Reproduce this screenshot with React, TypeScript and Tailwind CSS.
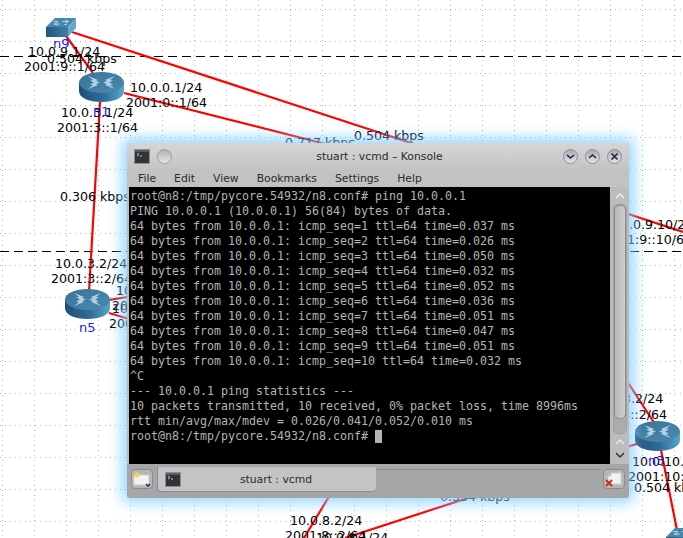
import React from "react";

const terminalLines = [
  "root@n8:/tmp/pycore.54932/n8.conf# ping 10.0.0.1",
  "PING 10.0.0.1 (10.0.0.1) 56(84) bytes of data.",
  "64 bytes from 10.0.0.1: icmp_seq=1 ttl=64 time=0.037 ms",
  "64 bytes from 10.0.0.1: icmp_seq=2 ttl=64 time=0.026 ms",
  "64 bytes from 10.0.0.1: icmp_seq=3 ttl=64 time=0.050 ms",
  "64 bytes from 10.0.0.1: icmp_seq=4 ttl=64 time=0.032 ms",
  "64 bytes from 10.0.0.1: icmp_seq=5 ttl=64 time=0.052 ms",
  "64 bytes from 10.0.0.1: icmp_seq=6 ttl=64 time=0.036 ms",
  "64 bytes from 10.0.0.1: icmp_seq=7 ttl=64 time=0.051 ms",
  "64 bytes from 10.0.0.1: icmp_seq=8 ttl=64 time=0.047 ms",
  "64 bytes from 10.0.0.1: icmp_seq=9 ttl=64 time=0.051 ms",
  "64 bytes from 10.0.0.1: icmp_seq=10 ttl=64 time=0.032 ms",
  "^C",
  "--- 10.0.0.1 ping statistics ---",
  "10 packets transmitted, 10 received, 0% packet loss, time 8996ms",
  "rtt min/avg/max/mdev = 0.026/0.041/0.052/0.010 ms",
];

const labels: [string, number, number][] = [
  ["10.0.9.1/24", 28, 44],
  ["2001:9::1/64", 24, 59],
  ["0.504 kbps", 47, 51],
  ["10.0.0.1/24", 130, 80],
  ["2001:0::1/64", 126, 95],
  ["10.0.3.1/24", 61, 105],
  ["2001:3::1/64", 57, 120],
  ["0.306 kbps", 60, 189],
  ["0.504 kbps", 354, 128],
  ["0.717 kbps", 285, 135],
  ["10.0.3.2/24", 55, 256],
  ["2001:3::2/64", 51, 271],
  ["10.0.4.1/24", 116, 283],
  ["2001:4::1/64", 112, 298],
  ["10.0.5.1/24", 112, 301],
  ["2001:5::1/64", 109, 316],
  ["10.0.9.10/24", 613, 217],
  ["2001:9::10/64", 603, 232],
  ["10.0.3.2/24", 591, 391],
  ["2001:3::2/64", 586, 407],
  ["10.0.10.1/24", 632, 454],
  ["2001:10::1/64", 628, 469],
  ["0.504 kbps", 634, 480],
  ["0.334 kbps", 440, 489],
  ["10.0.8.2/24", 290, 513],
  ["2001:8::2/64", 285, 528],
  ["10.0.8.1/24", 316, 530],
];

const nodeNames: [string, number, number][] = [
  ["n9", 53, 36],
  ["n1", 93, 104],
  ["n5", 79, 320],
  ["n3", 648, 453],
];

function Router({ id }: { id: string }) {
  return (
    <svg width="46" height="31" viewBox="0 0 46 31">
      <defs>
        <linearGradient id={id} x1="0" x2="1" y1="0" y2="0">
          <stop offset="0" stopColor="#1f4f78" />
          <stop offset="0.55" stopColor="#2f6d98" />
          <stop offset="1" stopColor="#5aa6cc" />
        </linearGradient>
        <linearGradient id={`${id}t`} x1="0" x2="1" y1="0" y2="1">
          <stop offset="0" stopColor="#3a7298" />
          <stop offset="1" stopColor="#4a8bb0" />
        </linearGradient>
      </defs>
      <path d="M0 10.5 V19 C0 26 10 30 22.5 30 C35 30 45 26 45 19 V10.5 Z" fill={`url(#${id})`} />
      <ellipse cx="22.5" cy="10.5" rx="22.5" ry="10.5" fill={`url(#${id}t)`} />
      <path
        d="M9 4 L19 8 L17 9 L21 10.5 L17 12 L19 13 L9 17 L14 13 L11 12.5 L15 10.5 L11 8.5 L14 8 Z M36 4 L26 8 L28 9 L24 10.5 L28 12 L26 13 L36 17 L31 13 L34 12.5 L30 10.5 L34 8.5 L31 8 Z"
        fill="#b5d2e0"
      />
    </svg>
  );
}

function Switch({ id }: { id: string }) {
  return (
    <svg width="32" height="21" viewBox="0 0 32 21">
      <defs>
        <linearGradient id={id} x1="0" x2="1" y1="0" y2="0">
          <stop offset="0" stopColor="#22567e" />
          <stop offset="1" stopColor="#3b80aa" />
        </linearGradient>
      </defs>
      <path d="M1 10 L10 1 H31 L23 10 Z" fill="#4886ab" />
      <path d="M23 10 L31 1 V11 L23 20 Z" fill="#64a8cb" />
      <rect x="1" y="10" width="22" height="10" fill={`url(#${id})`} />
      <path d="M9 7 H15 M13 5 L9 7 L13 8 M17 4.5 H24 M20 3 L24 4.5 L20 6 M8 4.5 H13 M19 7.5 H22" stroke="#a9cbdc" strokeWidth="1" fill="none" />
    </svg>
  );
}

function TitleButton({ kind }: { kind: "down" | "up" | "close" }) {
  const d = kind === "down" ? "M4 6 L7.5 9 L11 6" : kind === "up" ? "M4 9 L7.5 6 L11 9" : "M4.5 4.5 L10.5 10.5 M10.5 4.5 L4.5 10.5";
  return (
    <div className="flex h-[15px] w-[15px] items-center justify-center rounded-full border border-[#8f8f98] bg-gradient-to-b from-[#a9a9b2] to-[#e4e4e8]">
      <svg width="15" height="15" viewBox="0 0 15 15" className="shrink-0">
        <path d={d} stroke="#23233f" strokeWidth="1.6" fill="none" />
      </svg>
    </div>
  );
}

function TerminalIcon({ size }: { size: number }) {
  return (
    <svg width={size} height={size - 1} viewBox="0 0 16 15">
      <rect x="0.5" y="0.5" width="15" height="14" fill="#30343a" stroke="#8c8f92" />
      <rect x="1" y="1" width="14" height="2" fill="#565a60" />
      <path d="M3 4 L5 5.5 L3 7 M6 7 H8" stroke="#e8e8e8" strokeWidth="0.8" fill="none" />
    </svg>
  );
}

export default function App() {
  return (
    <div
      className="relative h-[538px] w-[683px] overflow-hidden bg-white text-[12.6px] leading-[15px] text-black"
      style={{ fontFamily: '"DejaVu Sans", sans-serif' }}
    >
      <svg className="absolute left-0 top-0" width="683" height="538">
        {Array.from({ length: 17 }, (_, i) => (
          <line key={`h${i}`} x1="0" x2="683" y1={9.5 + i * 32} y2={9.5 + i * 32} stroke="#b5b5b5" strokeDasharray="1 4" />
        ))}
        {Array.from({ length: 22 }, (_, i) => (
          <line key={`v${i}`} y1="0" y2="538" x1={2.5 + i * 32} x2={2.5 + i * 32} stroke="#b5b5b5" strokeDasharray="1 4" />
        ))}
        <line x1="0" x2="683" y1="56.5" y2="56.5" stroke="#000" strokeDasharray="9 5" />
        <line x1="0" x2="683" y1="251.5" y2="251.5" stroke="#000" strokeDasharray="9 5" />
        <g stroke="#f00" strokeWidth="2.2" fill="none">
          <line x1="66" y1="36" x2="93" y2="73" />
          <line x1="72" y1="32" x2="683" y2="232" />
          <line x1="124" y1="93" x2="420" y2="168" />
          <line x1="100" y1="102" x2="89" y2="292" />
          <line x1="109" y1="300" x2="200" y2="285" />
          <line x1="109" y1="313" x2="200" y2="340" />
          <line x1="655" y1="424" x2="600" y2="340" />
          <line x1="640" y1="443" x2="600" y2="455" />
          <line x1="661" y1="450" x2="677" y2="530" />
          <line x1="345" y1="538" x2="480" y2="494" />
          <line x1="304" y1="538" x2="345" y2="470" />
        </g>
      </svg>

      {labels.map(([text, x, y], i) => (
        <span key={i} className="absolute whitespace-nowrap" style={{ left: x, top: y }}>
          {text}
        </span>
      ))}

      <div className="absolute left-[45px] top-[17px]"><Switch id="s9" /></div>
      <div className="absolute left-[79px] top-[72px]"><Router id="r1" /></div>
      <div className="absolute left-[65px] top-[289px]"><Router id="r5" /></div>
      <div className="absolute left-[635px] top-[421px]"><Router id="r3" /></div>
      <div className="absolute left-[665px] top-[527px]"><Switch id="s2" /></div>

      {nodeNames.map(([name, x, y]) => (
        <span key={name} className="absolute whitespace-nowrap text-[13px] text-[#1a1aff]" style={{ left: x, top: y }}>
          {name}
        </span>
      ))}

      <div className="absolute left-[127px] top-[143px] flex h-[355px] w-[502px] flex-col rounded-[3px] bg-[#bcbcbc] text-[10.8px] text-[#2b2b2b] shadow-[0_0_14px_5px_rgba(125,205,255,0.8)]">
        <div className="flex h-[26px] shrink-0 items-center rounded-t-[3px] bg-gradient-to-b from-[#d6d6d6] to-[#c4c4c4] px-[7px]">
          <TerminalIcon size={16} />
          <div className="ml-[7px] h-[15px] w-[15px] rounded-full border border-[#a0a0a0] bg-gradient-to-b from-[#b0b0b0] to-[#e6e6e6]" />
          <span className="flex-1 pl-[24px] text-center">stuart : vcmd – Konsole</span>
          <div className="flex gap-[7px]">
            <TitleButton kind="down" />
            <TitleButton kind="up" />
            <TitleButton kind="close" />
          </div>
        </div>
        <div className="flex h-[18px] shrink-0 items-center gap-[18px] bg-[#c2c2c2] pl-[11px]">
          <span>File</span>
          <span>Edit</span>
          <span>View</span>
          <span>Bookmarks</span>
          <span>Settings</span>
          <span>Help</span>
        </div>
        <div className="flex h-[277px] shrink-0 pl-[2px]">
          <div
            className="w-[481px] bg-black pl-[1px] pt-[2px] text-[11.63px] leading-[15px] text-[#b4b4b4]"
            style={{ fontFamily: '"DejaVu Sans Mono", monospace' }}
          >
            {terminalLines.map((line, i) => (
              <div key={i} className="h-[15px] whitespace-pre">{line}</div>
            ))}
            <div className="flex h-[15px] items-center whitespace-pre">
              <span>root@n8:/tmp/pycore.54932/n8.conf# </span>
              <span className="h-[13px] w-[7px] bg-[#b4b4b4]" />
            </div>
          </div>
          <div className="flex flex-1 flex-col items-center">
            <svg width="12" height="10" viewBox="0 0 12 10" className="mt-[4px] shrink-0">
              <path d="M2 7 L6 3 L10 7" stroke="#f0f0f0" strokeWidth="1.5" fill="none" />
            </svg>
            <div className="mt-[3px] h-[230px] w-[14px] shrink-0 rounded-[5px] border border-[#a0a0a0] bg-[#acacac]">
              <div className="h-[214px] w-full rounded-[5px] border border-[#8e8e8e] bg-gradient-to-r from-[#b8b8b8] to-[#cfcfcf]" />
            </div>
            <svg width="12" height="10" viewBox="0 0 12 10" className="mt-[3px] shrink-0">
              <path d="M2 7 L6 3 L10 7" stroke="#e8e8e8" strokeWidth="1.5" fill="none" />
            </svg>
            <svg width="12" height="10" viewBox="0 0 12 10" className="mt-[3px] shrink-0">
              <path d="M2 3 L6 7 L10 3" stroke="#333" strokeWidth="1.5" fill="none" />
            </svg>
          </div>
        </div>
        <div className="flex flex-1 items-start rounded-b-[3px] bg-[#a6a6a8] pl-[4px] pt-[4px]">
          <div className="relative mt-[1px] flex h-[20px] w-[22px] shrink-0 items-center justify-center rounded-[4px] border border-[#8c8c8c] bg-[#b6b6b6]">
            <svg width="20" height="17" viewBox="0 0 20 17">
              <path d="M2 4 H17 V14 H2 Z" fill="#f2f2f2" stroke="#cfcfcf" />
              <circle cx="5" cy="4" r="2.5" fill="#f2d83c" />
              <path d="M14 13 L16 15 L18 13" stroke="#1c1c50" strokeWidth="1.4" fill="none" />
            </svg>
          </div>
          <div className="ml-[4px] -mt-[1px] flex h-[25px] w-[219px] shrink-0 items-center rounded-b-[4px] border-b border-l border-[#8d8d8d] bg-[#c4c4c4] pl-[7px]">
            <TerminalIcon size={16} />
            <span className="flex-1 pr-[5px] text-center">stuart : vcmd</span>
          </div>
          <div className="mt-[1px] h-[1px] w-[225px] shrink-0 bg-[#8a8a8a]" />
          <div className="relative mt-[1px] ml-[2px] flex h-[20px] w-[22px] shrink-0 items-center justify-center rounded-[4px] border border-[#8c8c8c] bg-[#b6b6b6]">
            <svg width="20" height="17" viewBox="0 0 20 17">
              <path d="M7 2 H17 V13 H4 V5 H7 Z" fill="#f2f2f2" stroke="#cfcfcf" />
              <path d="M2 9 L8 15 M8 9 L2 15" stroke="#d12a1c" strokeWidth="2" />
            </svg>
          </div>
        </div>
      </div>
    </div>
  );
}
